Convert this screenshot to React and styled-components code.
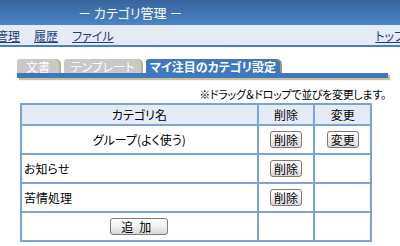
import styled, { createGlobalStyle } from 'styled-components';

const GlobalStyle = createGlobalStyle`
  html, body {
    margin: 0;
    padding: 0;
    background: #ffffff;
    overflow: hidden;
  }
  body {
    font-family: "Noto Sans CJK JP", "Noto Sans", sans-serif;
    font-size: 12px;
    font-feature-settings: "palt";
    color: #000;
  }
`;

const Header = styled.div`
  height: 25px;
  background: linear-gradient(to bottom, #3a659c 0%, #4176b4 60%, #4a86c6 100%);
  color: #ffffff;
  font-size: 13px;
  line-height: 25px;
  padding-left: 78px;
  white-space: nowrap;
`;

const NavBar = styled.div`
  height: 20px;
  background: #e4ebf5;
  border-bottom: 2px solid #4b7fc0;
  display: flex;
  align-items: center;
  gap: 14px;
`;

const NavLink = styled.a`
  color: #1f3f7a;
  text-decoration: underline;
  font-size: 12px;
  white-space: nowrap;
  &:first-child {
    margin-left: -4px;
  }
`;

const NavRight = styled(NavLink)`
  margin-left: auto;
  margin-right: -5px;
`;

const Main = styled.div`
  padding: 11px 0 0 17px;
`;

const Tabs = styled.div`
  display: flex;
  gap: 5px;
  align-items: flex-end;
  height: 15px;
`;

const Tab = styled.div`
  width: ${({ $w }) => $w}px;
  height: 14px;
  border-radius: 3px 5px 0 0;
  background: ${({ $active }) => ($active ? '#3f78c0' : '#c8c8c8')};
  color: #ffffff;
  font-size: 12px;
  font-weight: ${({ $active }) => ($active ? 'bold' : 'normal')};
  line-height: 15px;
  text-align: center;
  white-space: nowrap;
  box-shadow: 2px 0 0 ${({ $active }) => ($active ? '#9c9b6c' : '#b9b48a')};
`;

const TabBar = styled.div`
  width: 371px;
  height: 5px;
  background: #3f78c0;
  box-shadow: 2px 2px 1px #c8c295;
`;

const Note = styled.div`
  width: 369px;
  text-align: right;
  margin-top: 9px;
  font-size: 11px;
  letter-spacing: -0.3px;
  line-height: 14px;
`;

const Table = styled.table`
  margin: 2px 0 0 3px;
  width: 352px;
  border-collapse: collapse;
  border: 2px solid #7aa3da;
`;

const HeadCell = styled.th`
  height: 19px;
  background: #e4ebf5;
  border: 2px solid #7aa3da;
  font-weight: normal;
  font-size: 12px;
  padding: 0;
  width: ${({ $w }) => $w}px;
`;

const Cell = styled.td`
  height: 27px;
  border: 2px solid #7aa3da;
  padding: 0 2px;
  font-size: 12px;
  text-align: ${({ $align }) => $align || 'center'};
`;

const Button = styled.button`
  height: 17px;
  padding: 0 ${({ $pad }) => $pad || 3}px;
  border: 1px solid #7b7b7b;
  border-radius: 3px;
  background: linear-gradient(to bottom, #ffffff 0%, #f0f0f0 50%, #d8d8d8 100%);
  font-family: "Noto Sans CJK JP", sans-serif;
  font-feature-settings: "palt";
  font-size: 12px;
  line-height: 14px;
  color: #000;
  letter-spacing: ${({ $spacing }) => $spacing || 0}px;
`;

const rows = [
  { name: 'グループ(よく使う)', center: true, edit: true },
  { name: 'お知らせ' },
  { name: '苦情処理' },
];

export default function App() {
  return (
    <>
      <GlobalStyle />
      <Header>－ カテゴリ管理 －</Header>
      <NavBar>
        <NavLink>管理</NavLink>
        <NavLink>履歴</NavLink>
        <NavLink>ファイル</NavLink>
        <NavRight>トップ</NavRight>
      </NavBar>
      <Main>
        <Tabs>
          <Tab $w={42}>文書</Tab>
          <Tab $w={77}>テンプレート</Tab>
          <Tab $active $w={134}>マイ注目のカテゴリ設定</Tab>
        </Tabs>
        <TabBar />
        <Note>※ドラッグ＆ドロップで並びを変更します。</Note>
        <Table>
          <thead>
            <tr>
              <HeadCell $w={237}>カテゴリ名</HeadCell>
              <HeadCell $w={55}>削除</HeadCell>
              <HeadCell $w={55}>変更</HeadCell>
            </tr>
          </thead>
          <tbody>
            {rows.map((r) => (
              <tr key={r.name}>
                <Cell $align={r.center ? 'center' : 'left'}>{r.name}</Cell>
                <Cell><Button>削除</Button></Cell>
                <Cell>{r.edit && <Button>変更</Button>}</Cell>
              </tr>
            ))}
            <tr>
              <Cell><Button $pad={10} $spacing={6}>追加</Button></Cell>
              <Cell />
              <Cell />
            </tr>
          </tbody>
        </Table>
      </Main>
    </>
  );
}
